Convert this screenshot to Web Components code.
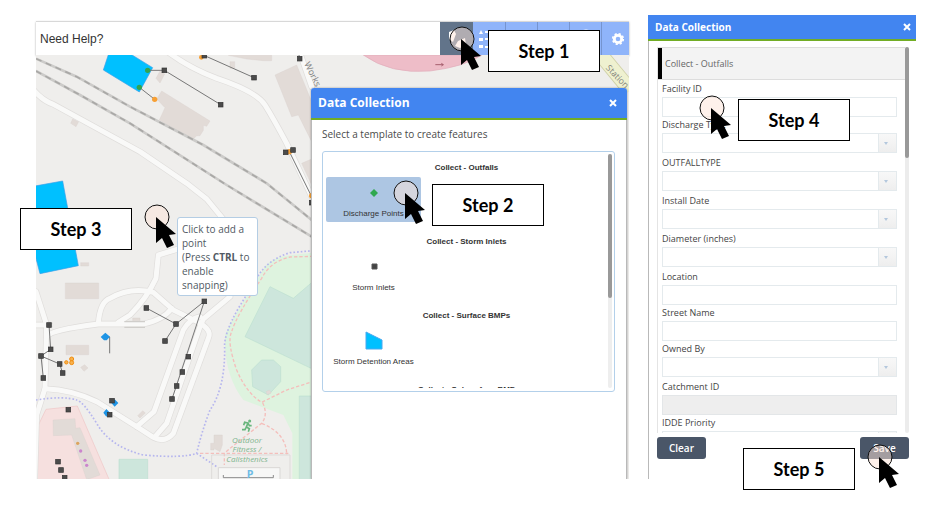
<!DOCTYPE html>
<html lang="en">
<head>
<meta charset="utf-8">
<title>Data Collection guide</title>
<style>
body { margin: 0; background: #fff; font-family: "Open Sans", sans-serif; color: #4a4a4a; }
</style>
</head>
<body>
<guide-page></guide-page>
<script>
const define = (name, html, setup) => customElements.define(name, class extends HTMLElement {
  connectedCallback() {
    if (this.shadowRoot) return;
    const t = document.createElement('template');
    t.innerHTML = typeof html === 'function' ? html(this) : html;
    this.attachShadow({ mode: 'open' }).append(t.content.cloneNode(true));
    if (setup) setup(this);
  }
});

define('step-label', `
<style>
:host { display: grid; place-items: center; box-sizing: border-box; width: 112px; height: 42px; background: #fff; border: 1px solid #000; color: #000; font: 700 18px/24px Lato, sans-serif; }
</style><slot></slot>`);

define('click-mark', `
<style>
:host { display: block; width: 34px; height: 46px; pointer-events: none; }
svg { display: block; }
</style>
<svg width="34" height="46" viewBox="0 0 34 46" aria-hidden="true">
<circle cx="13" cy="13" r="12" fill="#fde4d8" fill-opacity=".5" stroke="#111" stroke-width="1"/>
<path d="M12 13V39L18 34L23 44L30 41L25 31L32 30Z" fill="#000"/></svg>`);

define('app-toolbar', `
<style>
:host { display: flex; align-items: stretch; height: 34px; box-sizing: border-box; border-top: 1px solid #d8d8d8; background: #fff; box-shadow: 0 1px 2px #0005; position: relative; font-family: "Liberation Sans", sans-serif; }
a { flex: 1; padding-left: 4px; align-self: center; font-size: 12px; line-height: 16px; color: #333; text-decoration: none; }
nav { display: grid; grid-template-columns: 33px repeat(4, 32px) 28px; }
button { border: 0; border-left: 1px solid #7594cf; padding: 0; background: #8fb4fa; display: grid; place-items: center; }
button:first-child { background: #62748a; border: 0; }
button:nth-child(2) { border: 0; }
button:last-child { padding-left: 5px; }
svg { width: 20px; height: 20px; fill: #fff; }
</style>
<a href="#help">Need Help?</a>
<nav aria-label="Tools">
<button aria-label="Data collection"><svg viewBox="0 0 20 20"><path d="M2 3L7 1L9 5L6 13L2 10ZM11 12L18 9L19 16L13 19L8 17Z"/></svg></button>
<button aria-label="Legend"><svg viewBox="0 0 20 20"><path d="M0 5L2 1L4 5ZM0 9H4V12H0ZM0 16H4V19H0ZM6 2H19V4H6ZM6 9H19V11H6ZM6 17H19V19H6Z"/></svg></button>
<button aria-label="Layers"><svg viewBox="0 0 20 20"><path d="M10 1L18 6L10 11L2 6ZM2 10L10 15L18 10V12L10 17L2 12Z"/></svg></button>
<button aria-label="Table"><svg viewBox="0 0 20 20"><path d="M3 2H18V18H3ZM5 7H9V10H5ZM11 7H16V10H11Z" fill-rule="evenodd"/></svg></button>
<button aria-label="Search"><svg viewBox="0 0 20 20"><circle cx="10" cy="8" r="6" fill="none" stroke="#fff" stroke-width="3"/></svg></button>
<button aria-label="Settings"><svg viewBox="0 0 20 20"><g fill="none" stroke="#fff"><circle cx="10" cy="10" r="3.7" stroke-width="2.8"/><circle cx="10" cy="10" r="5.3" stroke-width="1.6" stroke-dasharray="2.2 1.96"/></g></svg></button>
</nav>`);

const nodes = [[403,166],[572,269],[672,188],[523,122],[809,131],[767,412],[789,405],
 [349,879],[438,927],[523,859],[57,930],[845,563],[62,1003],[33,1023],[89,1047],[98,1074],[40,1089],[405,978],
 [475,1025],[457,1071],[440,1113],[426,1152],[246,1157],[239,1199],[115,1184],[84,1340],[93,1365],[104,1388]];
define('site-map', `
<style>
:host { display: block; min-width: 0; min-height: 0; overflow: hidden; }
svg { display: block; width: 100%; height: 100%; }
text { font-family: "Open Sans", sans-serif; }
.park { font-size: 24px; font-style: italic; fill: #7fb58e; text-anchor: middle; }
.road { fill: none; stroke-linejoin: round; stroke-linecap: round; }
</style>
<svg viewBox="18 120 1779 1272" preserveAspectRatio="xMinYMin slice" role="img" aria-label="Site map">
<defs><g id="roads" class="road">
<path d="M-5 205Q30 255 70 268L330 410L470 505L530 552L590 625"/>
<path d="M415 112Q480 160 560 190Q680 230 705 270T770 385L845 545M805 100L845 215"/>
<path d="M445 702L385 720L378 790Q350 850 300 900L265 922"/>
<path d="M205 925Q210 860 240 850Q300 815 370 832L430 885L485 912Q550 940 535 970L430 1255Q405 1285 370 1267L320 1235L200 1160Q130 1125 45 1121"/>
<path d="M18 830L50 930L45 1120L20 1200L14 1395"/><path d="M50 965Q60 945 205 927L340 927Q400 915 425 880M600 845L520 912L510 935L410 1225L378 1262M320 1235L372 1190L460 945Q480 910 510 905M20 930H60"/>
</g></defs>
<rect x="18" y="120" width="1779" height="1272" fill="#efeeec"/>
<path d="M860 712L770 722Q710 730 690 780Q600 920 585 960V995Q590 1090 640 1155L760 1200L787 1255V1395H860Z" fill="#def3df"/>
<path d="M720 815L790 850L860 790V1068L645 965ZM665 1065L695 1035H730L752 1055V1100L715 1140L668 1115ZM808 1143H860V1395H808ZM267 1333H353V1395H267Z" fill="#cde6dc" stroke="#bddfd0" stroke-width="2"/>
<path d="M48 1183L142 1173L238 1395H18V1245Z" fill="#f6e0df" stroke="#efc5c5" stroke-width="2"/>
<g fill="#e2dbd7" stroke="#d8cfca" stroke-width="1"><path d="M380 252L395 228L540 318L530 334L520 331V346L510 362H500L487 375L388 315L405 278ZM735 180L800 150L845 260V380L805 300L785 305ZM595 121H725V137H700L650 132ZM378 190L390 168L404 177L390 204ZM600 140H614V160H600ZM122 325L128 312L146 320L138 335ZM815 445L845 432V510ZM106 804H206V851H106ZM152 743H176V753H152ZM108 991H176V1019H108ZM152 1057L164 1049L174 1059L162 1069ZM323 1202L338 1187L346 1194L330 1209ZM69 1215L135 1211L137 1240L150 1238L210 1380L170 1394L125 1260L70 1262ZM552 1260H577V1290L570 1310L552 1300V1305H542V1285H552ZM308 909H330V921H308ZM708 1130L718 1125L724 1134L712 1139Z"/></g>
<use href="#roads" stroke="#dfdddb" stroke-width="19"/><use href="#roads" stroke="#f9f9f8" stroke-width="15"/>
<g fill="none"><g stroke="#cccbc9" stroke-width="8"><path d="M18 131L140 185L300 275L520 390L710 505L845 615M18 168L150 240L300 325L590 510L845 665"/></g>
<path d="M18 131L140 185L300 275L520 390L710 505L845 615M18 168L150 240L300 325L590 510L845 665" stroke="#a9a8a6" stroke-width="5" stroke-dasharray="18 14"/>
<path d="M283 920H345M283 937H345" stroke="#d0cecb" stroke-width="4"/>
<path d="M850 707L780 713Q710 735 680 790L625 880Q580 960 584 1000Q585 1120 540 1185Q515 1250 500 1315Q460 1330 340 1320Q240 1295 200 1225Q160 1160 140 1155Q100 1142 18 1155M500 1315L560 1355" stroke="#b6b6ee" stroke-width="5" stroke-dasharray="5 6"/>
<path d="M850 724L780 726Q720 740 695 790Q620 900 605 950Q590 980 620 1065Q650 1135 695 1162L770 1125L850 1099M698 1163Q715 1200 695 1225L600 1300L583 1315V1350M695 1225Q770 1255 770 1320M510 1315H775" stroke="#f4bebb" stroke-width="4" stroke-dasharray="10 6"/>
<path d="M545 1400V1320H780V1400" stroke="#dddbd9" stroke-width="3"/><path d="M565 1400V1358H750V1400" stroke="#d9d7d5" fill="#f7f7f6" stroke-width="3"/><path d="M580 1380V1388H730V1380" stroke="#8b8b8b" stroke-width="3"/></g>
<path d="M1000 120Q1080 178 1200 168Q1305 155 1355 120Z" fill="#eebdc8" stroke="#dfacb9" stroke-width="2"/>
<path d="M1216 149H1240L1234 145M1240 149L1234 153" fill="none" stroke="#a75f6e" stroke-width="3"/>
<path d="M1705 110L1800 225" fill="none" stroke="#cfd0a6" stroke-width="46"/><path d="M1705 110L1800 225" fill="none" stroke="#eff1d0" stroke-width="41"/>
<text x="1726" y="160" font-size="26" fill="#85857c" transform="rotate(46 1726 160)">Station</text>
<text x="822" y="146" font-size="27" fill="#7e7e7e" transform="rotate(64 822 146)">Works</text>
<g fill="#00c0ff" stroke="#3c9ee8" stroke-width="2"><path d="M238 110L220 165L328 231L368 158L290 110ZM10 514L98 498L145 752L30 776L10 700Z"/></g>
<path d="M354 166H403L572 269M328 217L374 253M515 118L672 188M805 110L809 131M778 410L845 545M349 879L438 927L523 859L426 1152M438 927L405 978M57 930L62 1003L33 1023L89 1047L98 1074M33 1023L40 1089M239 1015V966H228" fill="none" stroke="#777" stroke-width="3"/>
<g fill="#32a34f"><circle cx="353" cy="166" r="8"/><circle cx="328" cy="217" r="8"/></g>
<g fill="#f7a035"><circle cx="374" cy="253" r="8"/><circle cx="514" cy="127" r="7"/><circle cx="778" cy="410" r="8"/><circle cx="845" cy="542" r="8"/></g>
<g fill="#f7b24f" stroke="#f18d0f" stroke-width="3"><circle cx="109" cy="1042" r="5"/><circle cx="125" cy="1032" r="6"/><circle cx="125" cy="1043" r="6"/></g>
<g fill="#1e94e5"><path d="M226 953L240 965L230 976H222L212 966ZM254 1153L265 1164L254 1175L244 1164ZM229 1182L240 1193L229 1205L220 1193Z"/></g>
<g>${nodes.map(([x,y]) => `<rect x="${x-7}" y="${y-7}" width="14" height="14" fill="#4b4b4b" stroke="#333" stroke-width="2"/>`).join('')}</g>
<circle cx="143" cy="1285" r="5" fill="#dca35d"/><g fill="#cb85cd"><circle cx="152" cy="1308" r="5"/><circle cx="165" cy="1336" r="5"/><circle cx="170" cy="1351" r="5"/></g>
<g fill="none" stroke="#68b57c" stroke-width="5"><circle cx="659" cy="1218" r="2"/><path d="M641 1231L644 1222L654 1224L649 1236L658 1241L655 1250M649 1236L645 1244H636M654 1224L658 1232H665"/></g>
<text class="park" x="651" y="1283">Outdoor</text><text class="park" x="651" y="1312">Fitness /</text><text class="park" x="651" y="1341">Calisthenics</text>
<text x="650" y="1388" font-size="32" font-weight="700" fill="#70bce5">P</text>
</svg>`);

define('map-tip', `
<style>
:host { display: block; box-sizing: border-box; width: 81px; padding: 4px 4px 3px 4px; border: 1px solid #b4cde4; border-radius: 3px; background: #fff; font-size: 10px; line-height: 14px; color: #505963; }
</style><slot></slot>`);

define('tool-panel', el => `
<style>
:host { display: flex; flex-direction: column; box-sizing: border-box; background: #fff; min-width: 0; }
header { display: flex; align-items: center; justify-content: space-between; box-sizing: border-box; padding: 0 var(--close, 8px) 0 7px; background: #4285f0; border-bottom: 2px solid #72ad25; color: #fff; height: var(--head, 32px); font-size: var(--title, 12px); }
h2 { margin: 0; font-size: inherit; font-weight: 700; line-height: 20px; }
button { border: 0; background: none; padding: 0; display: grid; place-items: center; width: 10px; height: 16px; }
svg { width: 8px; height: 8px; }
main { flex: 1; min-height: 0; display: flex; flex-direction: column; border-left: 1px solid #b9b9b9; border-right: var(--edge, 0) solid #b9b9b9; }
</style>
<header><h2>${el.getAttribute('heading')}</h2><button aria-label="Close"><svg viewBox="0 0 8 8"><path d="M1 1L7 7M7 1L1 7" stroke="#fff" stroke-width="2"/></svg></button></header>
<main><slot></slot></main>`);

define('template-list', `
<style>
:host { display: block; padding: 6px 11px 0 10px; }
p { margin: 0 0 9px; font-size: 10px; line-height: 16px; }
.box { display: flex; height: 241px; box-sizing: border-box; border: 1px solid #b3d0ea; border-radius: 3px; padding: 0 2px 3px 3px; }
.view { flex: 1; height: 236px; overflow: hidden; }
.track { width: 4px; margin-top: 2px; background: #eee; border-radius: 2px; }
.thumb { height: 144px; background: #999; border-radius: 2px; }
</style>
<p>Select a template to create features</p>
<div class="box"><div class="view"><slot></slot></div><div class="track"><div class="thumb"></div></div></div>`);

define('template-group', el => `
<style>
:host { display: block; box-sizing: border-box; height: 74px; padding-top: 10px; font-family: "Liberation Sans", sans-serif; font-size: 8px; color: #333; }
h3 { margin: 0 0 3px; font-size: 8px; line-height: 12px; text-align: center; padding-right: 1px; }
button { display: flex; flex-direction: column; align-items: center; width: 95px; height: 45px; border: 0; border-radius: 2px; background: ${el.hasAttribute('selected') ? '#adc6e3' : 'none'}; padding: 6px 0 0; font: inherit; line-height: 10px; color: inherit; gap: 6px; white-space: nowrap; }
svg { width: 20px; height: 20px; flex: none; }
</style>
<h3>${el.getAttribute('heading')}</h3>
${el.hasAttribute('item') ? `<button><svg viewBox="0 0 20 20" aria-hidden="true">${{
 point: '<path d="M10 6L14 10L10 14L6 10Z" fill="#2fa84f"/>',
 inlet: '<path d="M8 7H13V12H8Z" fill="#444" stroke="#555"/>',
 area: '<path d="M2 1L18 9V18H2Z" fill="#00c0ff" stroke="#48a8f0"/>'}[el.getAttribute('icon')]}</svg>${el.getAttribute('item')}</button>` : ''}`);

define('form-field', el => {
  const kind = el.getAttribute('kind') || 'text';
  return `
<style>
:host { display: block; ${kind === 'select' ? 'padding-bottom: 2px;' : ''} }
label { display: block; font-size: 9px; line-height: 16px; color: #444; }
div { position: relative; }
input, select { display: block; appearance: none; box-sizing: border-box; width: 100%; height: 20px; margin: 0; border: 1px solid #e4eaed; border-radius: 0; background: #fff; font: 9px "Open Sans", sans-serif; padding: 0 4px; }
input:disabled { background: #eee; border-color: #e3e6e8; }
select { background: linear-gradient(#f8f8f8, #eee) right / 18px 100% no-repeat #fff; }
div.select::before { content: ""; position: absolute; right: 18px; top: 1px; bottom: 1px; border-left: 1px solid #e4eaed; }
div.select::after { content: ""; position: absolute; right: 9px; top: 9px; border: 2px solid transparent; border-top: 3px solid #b3c7dd; border-bottom: 0; }
</style>
<label for="c">${el.getAttribute('label')}</label>
<div class="${kind}">${kind === 'select' ? '<select id="c"><option></option></select>' : `<input id="c" type="text" ${kind === 'readonly' ? 'disabled' : ''}>`}</div>`;
});

define('feature-form', `
<style>
:host { display: flex; flex-direction: column; padding: 6px 7px 0 8px; }
.frame { display: flex; height: 386px; }
.view { flex: 1; min-width: 0; overflow: hidden; border-left: 1px solid #e4e4e4; }
h3 { margin: 0; display: flex; align-items: center; height: 33px; box-sizing: border-box; box-shadow: inset 4px 0 #000; border-top: 1px solid #ddd; border-bottom: 1px solid #ddd; background: #f3f3f3; padding-left: 7px; font-size: 9px; font-weight: 400; color: #666; }
.fields { padding: 1px 8px 0 4px; }
.track { width: 4px; background: #ececec; border-radius: 2px; }
.thumb { height: 111px; background: #999; border-radius: 2px; }
footer { display: flex; justify-content: space-between; padding-top: 4px; }
button { width: 49px; height: 22px; border: 0; border-radius: 3px; background: #4a5668; color: #fff; font: 600 10px/16px "Open Sans", sans-serif; padding: 0; }
</style>
<div class="frame"><div class="view"><h3>Collect - Outfalls</h3><div class="fields"><slot></slot></div></div><div class="track"><div class="thumb"></div></div></div>
<footer><button>Clear</button><button>Save</button></footer>`);

define('guide-page', `
<style>
:host { display: grid; grid-template-columns: minmax(0, 593fr) minmax(0, 268fr); column-gap: 19px; box-sizing: border-box; min-height: 100vh; padding: 15px 16px 31px 36px; position: relative; }
.app { display: flex; flex-direction: column; padding-top: 6px; }
.stage { position: relative; flex: 1; display: grid; grid-template-columns: minmax(0, 1fr) 316px 2px; grid-template-rows: 33px minmax(391px, 1fr); overflow: hidden; }
site-map { grid-area: 1 / 1 / -1 / -1; position: absolute; inset: 0; }
.templates { grid-area: 2 / 2; --head: 32px; --title: 12px; --edge: 1px; --close: 9px; position: relative; border-radius: 3px 3px 0 0; box-shadow: 0 0 2px #0006; overflow: hidden; }
.form { --head: 26px; --title: 10px; --close: 4px; }
map-tip { position: absolute; left: 141px; top: 162px; }
step-label, click-mark { position: absolute; }
</style>
<section class="app">
<app-toolbar></app-toolbar>
<div class="stage">
<site-map></site-map>
<map-tip>Click to add a point<br>(Press <b>CTRL</b> to enable snapping)</map-tip>
<tool-panel class="templates" heading="Data Collection">
<template-list>
<template-group heading="Collect - Outfalls" item="Discharge Points" icon="point" selected></template-group>
<template-group heading="Collect - Storm Inlets" item="Storm Inlets" icon="inlet"></template-group>
<template-group heading="Collect - Surface BMPs" item="Storm Detention Areas" icon="area"></template-group>
<template-group heading="Collect - Subsurface BMP"></template-group>
</template-list>
</tool-panel>
</div>
</section>
<tool-panel class="form" heading="Data Collection">
<feature-form>
<form-field label="Facility ID"></form-field>
<form-field label="Discharge Type" kind="select"></form-field>
<form-field label="OUTFALLTYPE" kind="select"></form-field>
<form-field label="Install Date" kind="select"></form-field>
<form-field label="Diameter (inches)" kind="select"></form-field>
<form-field label="Location"></form-field>
<form-field label="Street Name"></form-field>
<form-field label="Owned By" kind="select"></form-field>
<form-field label="Catchment ID" kind="readonly"></form-field>
<form-field label="IDDE Priority" kind="select"></form-field>
</feature-form>
</tool-panel>
<click-mark style="left:449px;top:26px"></click-mark><step-label style="left:488px;top:30px">Step 1</step-label>
<click-mark style="left:393px;top:180px"></click-mark><step-label style="left:432px;top:184px">Step 2</step-label>
<click-mark style="left:144px;top:204px"></click-mark><step-label style="left:20px;top:208px">Step 3</step-label>
<click-mark style="left:699px;top:95px"></click-mark><step-label style="left:738px;top:99px">Step 4</step-label>
<click-mark style="left:867px;top:444px"></click-mark><step-label style="left:743px;top:448px">Step 5</step-label>`);
</script>
</body>
</html>
